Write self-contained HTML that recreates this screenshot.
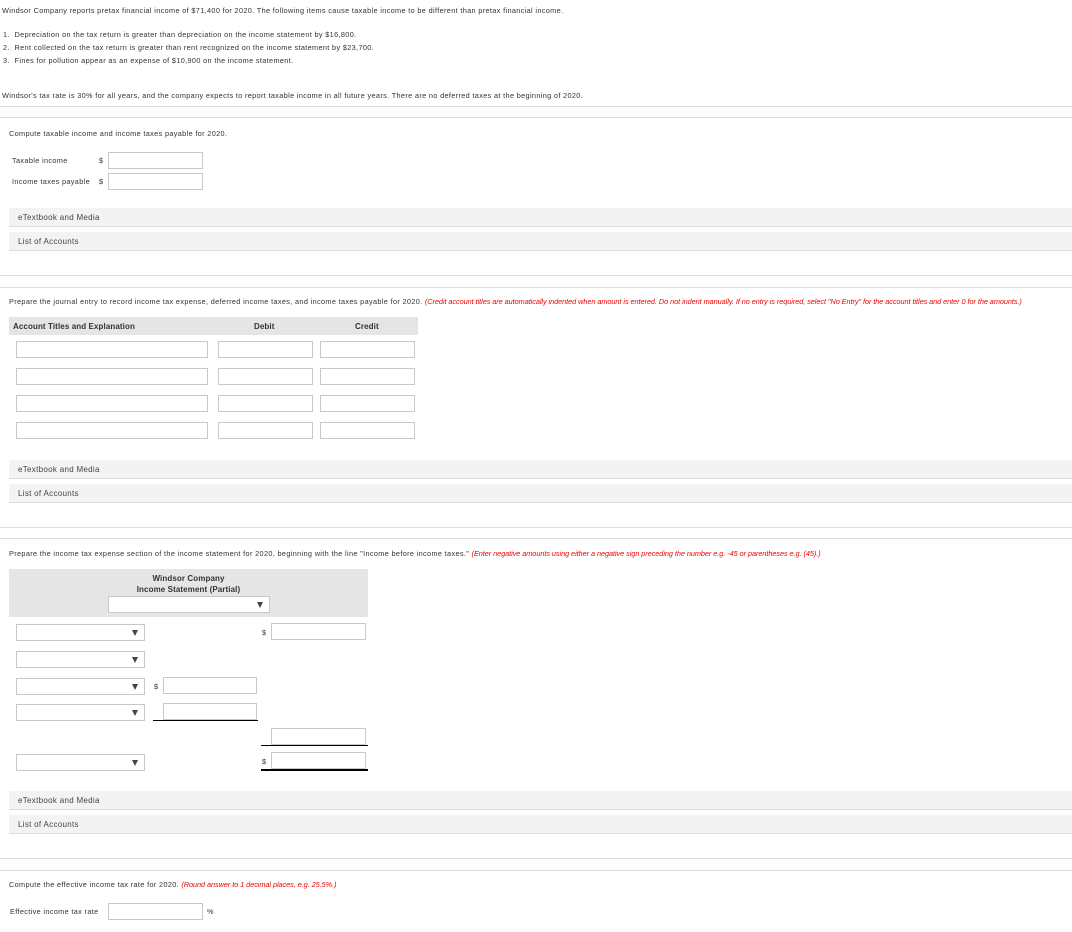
<!DOCTYPE html>
<html><head><style>
body{margin:0;width:1072px;height:932px;background:#fff;font-family:"Liberation Sans",sans-serif;font-size:7.3px;letter-spacing:0.35px;color:#333;position:relative;overflow:hidden}
.a{position:absolute;white-space:nowrap}
.i{position:absolute;border:1px solid #c8c8c8;background:#fff;box-sizing:border-box;height:17px}
.hr{position:absolute;left:0;width:1072px;height:1px;background:#ddd}
.p{position:absolute;left:9px;width:1063px;height:19px;background:#f3f3f3;border-bottom:1px solid #ddd;box-sizing:border-box;font-size:8px;letter-spacing:0.3px;padding:5px 0 0 9px;color:#444}
.r{color:#e00;font-style:italic;letter-spacing:-0.05px}
.s{position:absolute;border:1px solid #c8c8c8;background:#fff;box-sizing:border-box;height:17px}
.s:after{content:"";position:absolute;right:6px;top:5px;border-left:3px solid transparent;border-right:3px solid transparent;border-top:6px solid #444}
.b{font-weight:bold;color:#333;letter-spacing:0.1px;font-size:8px}
</style></head><body>
<div class="a" style="left:2px;top:6px">Windsor Company reports pretax financial income of $71,400 for 2020. The following items cause taxable income to be different than pretax financial income.</div>
<div class="a" style="left:3px;top:30px">1.&nbsp;&nbsp;Depreciation on the tax return is greater than depreciation on the income statement by $16,800.</div>
<div class="a" style="left:3px;top:43px">2.&nbsp;&nbsp;Rent collected on the tax return is greater than rent recognized on the income statement by $23,700.</div>
<div class="a" style="left:3px;top:56px">3.&nbsp;&nbsp;Fines for pollution appear as an expense of $10,900 on the income statement.</div>
<div class="a" style="left:2px;top:91px">Windsor's tax rate is 30% for all years, and the company expects to report taxable income in all future years. There are no deferred taxes at the beginning of 2020.</div>
<div class="hr" style="top:106px"></div><div class="hr" style="top:117px"></div>
<div class="a" style="left:9px;top:129px">Compute taxable income and income taxes payable for 2020.</div>
<div class="a" style="left:12px;top:156px">Taxable income</div><div class="a" style="left:99px;top:156px">$</div><div class="i" style="left:108px;top:152px;width:95px"></div>
<div class="a" style="left:12px;top:177px">Income taxes payable</div><div class="a" style="left:99px;top:177px">$</div><div class="i" style="left:108px;top:173px;width:95px"></div>
<div class="p" style="top:208px">eTextbook and Media</div>
<div class="p" style="top:232px">List of Accounts</div>
<div class="hr" style="top:275px"></div><div class="hr" style="top:287px"></div>
<div class="a" style="left:9px;top:297px">Prepare the journal entry to record income tax expense, deferred income taxes, and income taxes payable for 2020. <span class="r">(Credit account titles are automatically indented when amount is entered. Do not indent manually. If no entry is required, select "No Entry" for the account titles and enter 0 for the amounts.)</span></div>
<div class="a" style="left:9px;top:317px;width:409px;height:18px;background:#e5e5e5"></div>
<div class="a b" style="left:13px;top:322px">Account Titles and Explanation</div>
<div class="a b" style="left:254px;top:322px">Debit</div>
<div class="a b" style="left:355px;top:322px">Credit</div>
<div class="i" style="left:16px;top:341px;width:192px"></div><div class="i" style="left:218px;top:341px;width:95px"></div><div class="i" style="left:320px;top:341px;width:95px"></div>
<div class="i" style="left:16px;top:368px;width:192px"></div><div class="i" style="left:218px;top:368px;width:95px"></div><div class="i" style="left:320px;top:368px;width:95px"></div>
<div class="i" style="left:16px;top:395px;width:192px"></div><div class="i" style="left:218px;top:395px;width:95px"></div><div class="i" style="left:320px;top:395px;width:95px"></div>
<div class="i" style="left:16px;top:422px;width:192px"></div><div class="i" style="left:218px;top:422px;width:95px"></div><div class="i" style="left:320px;top:422px;width:95px"></div>
<div class="p" style="top:460px">eTextbook and Media</div>
<div class="p" style="top:484px">List of Accounts</div>
<div class="hr" style="top:527px"></div><div class="hr" style="top:538px"></div>
<div class="a" style="left:9px;top:549px">Prepare the income tax expense section of the income statement for 2020, beginning with the line "Income before income taxes." <span class="r">(Enter negative amounts using either a negative sign preceding the number e.g. -45 or parentheses e.g. (45).)</span></div>
<div class="a" style="left:9px;top:569px;width:359px;height:48px;background:#e5e5e5"></div>
<div class="a b" style="left:9px;width:359px;text-align:center;top:574px">Windsor Company</div>
<div class="a b" style="left:9px;width:359px;text-align:center;top:585px">Income Statement (Partial)</div>
<div class="s" style="left:108px;top:596px;width:162px"></div>
<div class="s" style="left:16px;top:624px;width:129px"></div><div class="a" style="left:262px;top:628px">$</div><div class="i" style="left:271px;top:623px;width:95px"></div>
<div class="s" style="left:16px;top:651px;width:129px"></div>
<div class="s" style="left:16px;top:678px;width:129px"></div><div class="a" style="left:154px;top:682px">$</div><div class="i" style="left:163px;top:677px;width:94px"></div>
<div class="s" style="left:16px;top:704px;width:129px"></div><div class="i" style="left:163px;top:703px;width:94px"></div><div class="a" style="left:153px;top:720px;width:105px;height:1px;background:#000"></div>
<div class="i" style="left:271px;top:728px;width:95px"></div><div class="a" style="left:261px;top:745px;width:107px;height:1px;background:#000"></div>
<div class="s" style="left:16px;top:754px;width:129px"></div><div class="a" style="left:262px;top:757px">$</div><div class="i" style="left:271px;top:752px;width:95px"></div><div class="a" style="left:261px;top:769px;width:107px;height:2px;background:#000"></div>
<div class="p" style="top:791px">eTextbook and Media</div>
<div class="p" style="top:815px">List of Accounts</div>
<div class="hr" style="top:858px"></div><div class="hr" style="top:870px"></div>
<div class="a" style="left:9px;top:880px">Compute the effective income tax rate for 2020. <span class="r">(Round answer to 1 decimal places, e.g. 25.5%.)</span></div>
<div class="a" style="left:10px;top:907px">Effective income tax rate</div><div class="i" style="left:108px;top:903px;width:95px"></div><div class="a" style="left:207px;top:907px">%</div>
</body></html>
